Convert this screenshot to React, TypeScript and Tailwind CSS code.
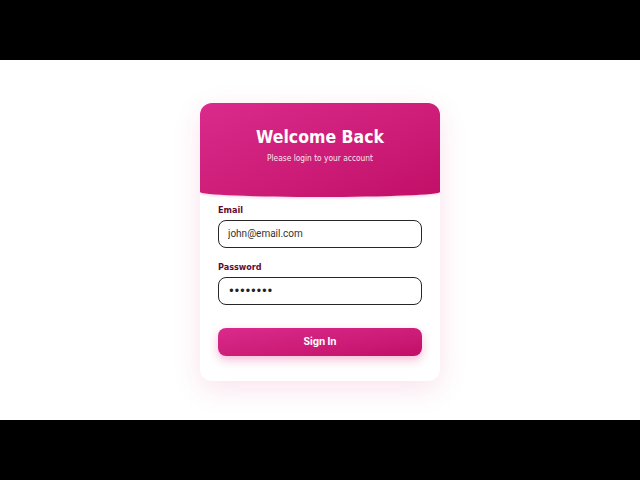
import React from 'react';

export default function App() {
  return (
    <div className="flex h-[480px] w-[640px] flex-col bg-black">
      <div className="mt-[60px] flex h-[360px] items-center justify-center bg-white">
        <LoginCard />
      </div>
    </div>
  );
}

function LoginCard() {
  return (
    <div className="mt-[3px] w-[240px] overflow-hidden rounded-[12px] bg-white shadow-[0_8px_28px_rgba(219,39,119,0.13)]">
      <div className="rounded-bl-[50%_5px] rounded-br-[50%_5px] bg-gradient-to-br from-[#da2a8c] to-[#c20e68] pb-[33px] pt-[23px] text-center text-white shadow-[0_1px_3px_rgba(219,39,119,0.25)] [font-family:'DejaVu_Sans_Condensed','DejaVu_Sans',sans-serif]">
        <h1 className="text-[17.5px] font-bold leading-[22px]">Welcome Back</h1>
        <p className="mt-[4px] text-[8.3px] leading-[12px] text-[#fbe3ef]">Please login to your account</p>
      </div>
      <form className="flex flex-col px-[18px] pb-[25px] pt-[7px]" onSubmit={(e) => e.preventDefault()}>
        <label className="mb-[4px] text-[9px] font-bold leading-[12px] text-[#600a32] [font-family:'DejaVu_Sans_Condensed','DejaVu_Sans',sans-serif]">
          Email
        </label>
        <input
          type="email"
          defaultValue="john@email.com"
          className="h-[28px] rounded-[8px] border-[1.5px] border-[#262626] px-[9px] text-[10px] text-[#333] outline-none [font-family:Roboto,sans-serif]"
        />
        <label className="mb-[4px] mt-[13px] text-[9px] font-bold leading-[12px] text-[#600a32] [font-family:'DejaVu_Sans_Condensed','DejaVu_Sans',sans-serif]">
          Password
        </label>
        <input
          type="password"
          defaultValue="password"
          className="h-[28px] rounded-[8px] border-[1.5px] border-[#262626] px-[9px] text-[11.5px] tracking-[-1.3px] text-[#222] outline-none [font-family:'DejaVu_Sans',sans-serif]"
        />
        <button
          type="submit"
          className="mt-[23px] h-[28px] rounded-[8px] bg-gradient-to-br from-[#da2a8c] to-[#c20e68] text-[10px] font-bold text-white shadow-[0_4px_10px_rgba(219,39,119,0.3)] [font-family:Inter,sans-serif]"
        >
          Sign In
        </button>
      </form>
    </div>
  );
}
